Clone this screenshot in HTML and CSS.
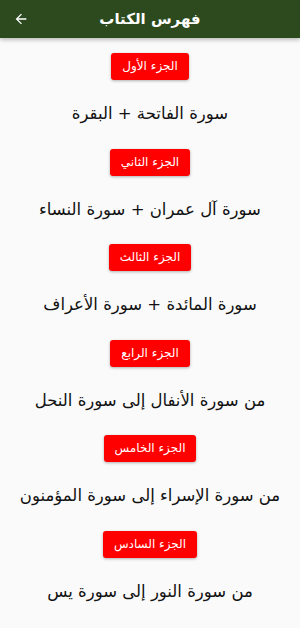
FILE: index.html
```html
<!DOCTYPE html>
<html lang="ar" dir="rtl">
<head>
    <meta charset="UTF-8">
    <meta name="viewport" content="width=device-width, initial-scale=1.0">
    <title>فهرس الكتاب</title>
    <link rel="stylesheet" href="styles.css">
</head>
<body>
    <div class="app-bar">
        <h1 class="app-title">فهرس الكتاب</h1>
        <button class="back-btn" aria-label="رجوع">
            <svg width="16" height="16" viewBox="0 0 24 24"><path d="M20 11H7.83l5.59-5.59L12 4l-8 8 8 8 1.41-1.41L7.83 13H20v-2z" fill="#fff"/></svg>
        </button>
    </div>

    <div class="index-list">
        <div class="part">
            <div class="part-btn">الجزء الأول</div>
            <div class="part-title">سورة الفاتحة + البقرة</div>
        </div>
        <div class="part">
            <div class="part-btn">الجزء الثاني</div>
            <div class="part-title">سورة آل عمران + سورة النساء</div>
        </div>
        <div class="part">
            <div class="part-btn">الجزء الثالث</div>
            <div class="part-title">سورة المائدة + سورة الأعراف</div>
        </div>
        <div class="part">
            <div class="part-btn">الجزء الرابع</div>
            <div class="part-title">من سورة الأنفال إلى سورة النحل</div>
        </div>
        <div class="part">
            <div class="part-btn">الجزء الخامس</div>
            <div class="part-title">من سورة الإسراء إلى سورة المؤمنون</div>
        </div>
        <div class="part">
            <div class="part-btn">الجزء السادس</div>
            <div class="part-title">من سورة النور إلى سورة يس</div>
        </div>
    </div>
</body>
</html>
```

FILE: styles.css
```css
body {
    margin: 0;
    background-color: #fafafa;
    font-family: "DejaVu Sans", "Noto Sans", sans-serif;
    color: #111;
}

.app-bar {
    position: relative;
    height: 38px;
    background-color: #2d4a1f;
    display: flex;
    align-items: center;
    justify-content: center;
    box-shadow: 0 2px 4px rgba(0, 0, 0, 0.25);
}

.app-title {
    margin: 0;
    color: #fff;
    font-size: 15px;
    font-weight: bold;
}

.back-btn {
    position: absolute;
    left: 13px;
    top: 11px;
    padding: 0;
    border: none;
    background: none;
    width: 16px;
    height: 16px;
}

.index-list {
    padding-top: 15px;
}

.part {
    display: flex;
    flex-direction: column;
    align-items: center;
    height: 95.6px;
}

.part-btn {
    height: 27px;
    line-height: 27px;
    padding: 0 11px;
    background-color: #ff0000;
    color: #fff;
    font-size: 12px;
    border-radius: 3px;
    box-shadow: 0 1px 3px rgba(0, 0, 0, 0.3);
}

.part-title {
    margin-top: 24px;
    line-height: 20px;
    font-size: 16.5px;
}
```
